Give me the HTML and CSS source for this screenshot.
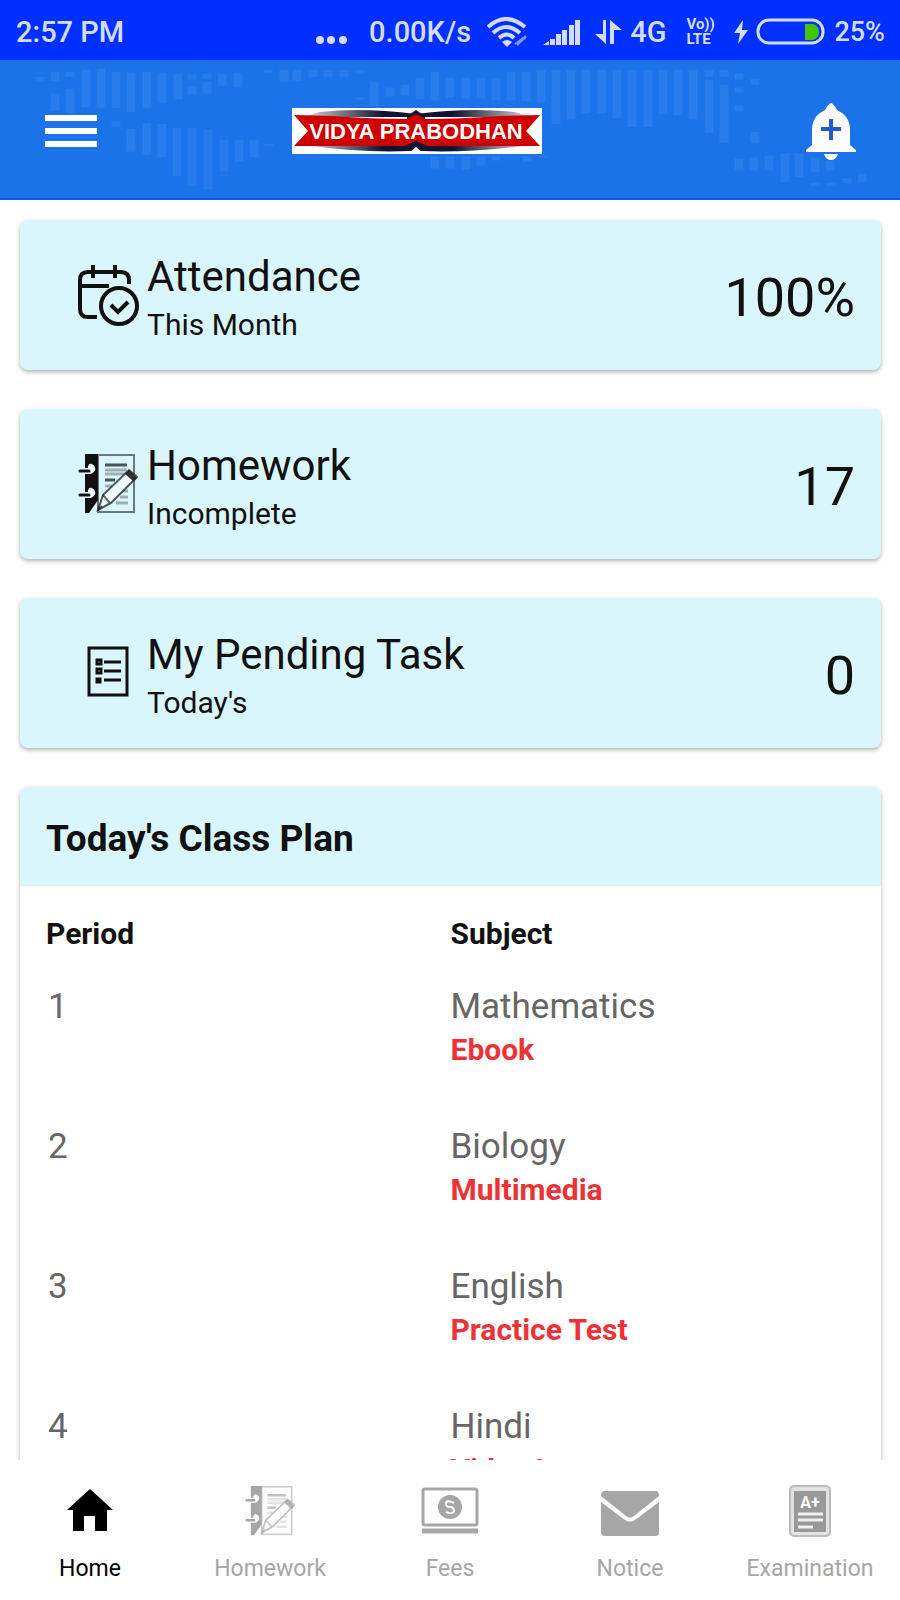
FILE: index.html
```html
<!DOCTYPE html>
<html lang="en">

<head>
    <meta charset="UTF-8">
    <meta name="viewport" content="width=device-width, initial-scale=1.0">
    <title>Vidya Prabodhan</title>
    <link rel="stylesheet" href="styles.css">
</head>

<body>

    <!-- Icon shared by the homework card and the bottom menu -->
    <svg class="sprite" aria-hidden="true">
        <symbol id="notebook" viewBox="0 0 60 60">
            <rect x="20" y="1" width="36" height="57" fill="none" stroke="currentColor" stroke-width="2" opacity=".55" />
            <path d="M7 0h13v46l-9 13H7z" fill="currentColor" />
            <path d="M27 11h22M27 26h10" stroke="currentColor" stroke-width="3" opacity=".7" />
            <path d="M27 16h22M27 20h20M27 32h7M42 37h8M42 43h8M38 49h12" stroke="currentColor" stroke-width="3" opacity=".3" />
            <g fill="none" stroke-linecap="round">
                <path d="M4 17h8q4-2 1-4M4 41h8q4-2 1-4" class="page-color" stroke-width="6" />
                <path d="M2 17h9M2 41h9" stroke="currentColor" stroke-width="3" />
            </g>
            <path d="M20 56l5-15 26-25 8 7-26 26z" class="page-fill" stroke="currentColor" stroke-width="2" stroke-opacity=".7" />
            <path d="M47 20l4-4 8 8-4 3z" fill="currentColor" opacity=".85" />
            <path d="M25 41l7 8M20 56l4-4" stroke="currentColor" stroke-width="2" opacity=".6" />
        </symbol>
    </svg>

    <!-- Status bar -->
    <div class="status-bar">
        <span class="time">2:57 PM</span>
        <div class="status-icons">
            <svg width="31" height="44" viewBox="0 0 31 44" fill="currentColor">
                <circle cx="4" cy="30" r="4" />
                <circle cx="15" cy="30" r="4" />
                <circle cx="27" cy="30" r="4" />
            </svg>
            <span class="speed">0.00K/s</span>
            <svg class="wifi" width="42" height="30" viewBox="0 0 42 30" fill="none" stroke="currentColor" stroke-width="4">
                <path d="M1 10q18-16 37 0M6 16q13-12 27 0M12 21q8-7 15 0" />
                <path d="M15 25q5-4 10 0l-5 5z" fill="currentColor" stroke="none" />
                <path d="M28 27l11-8M30 28l9-8" stroke-width="2" opacity=".6" />
            </svg>
            <svg class="signal" width="38" height="26" viewBox="0 0 38 26" fill="currentColor">
                <path d="M0 26l6-4v4zM7 20h5v6H7zM13 15h5v11h-5zM19 11h5v15h-5zM26 6h5v20h-5zM32 1h5v25h-5z" />
            </svg>
            <svg class="data" width="27" height="26" viewBox="0 0 27 26" fill="currentColor">
                <path d="M8 1h3v24L0 15h8zM19 25h-4V1l12 10h-8z" />
            </svg>
            <span class="network">4G</span>
            <span class="volte"><span>Vo))</span><span>LTE</span></span>
            <svg class="bolt" width="14" height="24" viewBox="0 0 14 24" fill="currentColor">
                <path d="M9 0L0 13h6L4 24l10-14H8z" />
            </svg>
            <svg class="battery" width="70" height="28" viewBox="0 0 70 28" fill="none">
                <rect x="2" y="2" width="65" height="23" rx="11" stroke="currentColor" stroke-width="3" />
                <path d="M49 6h8q6 2 6 8t-6 8h-8z" fill="#45c400" />
            </svg>
            <span class="percent">25%</span>
        </div>
    </div>

    <!-- App header -->
    <header class="app-header">
        <!-- Faint dotted map behind the header -->
        <svg class="map" viewBox="0 0 900 140" preserveAspectRatio="none" aria-hidden="true">
            <g fill="none" stroke="#297ceb" stroke-width="9">
                <path d="M40 17v4M55 12v9M70 12v5M55 34v18M70 29v25M86 10v38M101 9v40M116 12v37M131 13v40M147 12v37M162 13v31M178 14v26M192 14v6M192 26v10M207 14v5M207 22v12M222 14v12M238 13v15" />
                <path d="M116 62v6M131 70v23M147 64v32M162 65v34M177 69v49M192 69v59M208 71v60M224 81v32M239 81v22M254 81v18M269 85v2" />
                <path d="M268 10v3M284 10v12M297 10v11M313 10v7M328 10v7M344 10v7M360 10v3M360 38v2M374 22v25M390 28v9M405 25v11M420 18v22M435 12v29M450 18v20M466 18v21M481 18v21M496 18v23M511 12v29M526 12v30M541 10v33M556 10v55M571 10v50M586 10v44M602 10v44M617 10v49M632 10v58M648 10v58M663 10v45M678 10v46M693 10v50M709 10v7M709 20v54M724 10v7M724 25v59M739 14v6M739 28v5M739 46v6M755 19v6M755 73v11" />
                <path d="M435 98v12M450 98v12M466 98v13M481 98v9M496 98v4M527 98v5M543 97v2M739 100v12M754 99v13M769 97v15M785 94v30M799 94v25M815 99v15M830 102v10M815 125v3M831 125v3M847 120v5M862 116v8" />
            </g>
        </svg>
        <button type="button" class="icon-button" aria-label="Menu">
            <svg width="52" height="32" viewBox="0 0 52 32" fill="#fff">
                <path d="M0 0h52v6H0zM0 13h52v6H0zM0 26h52v6H0z" />
            </svg>
        </button>
        <svg class="logo" viewBox="0 0 250 46" role="img" aria-label="Vidya Prabodhan">
            <defs>
                <linearGradient id="swoosh">
                    <stop offset="0" stop-color="#ddd" />
                    <stop offset=".35" stop-color="#10132f" />
                    <stop offset=".65" stop-color="#10132f" />
                    <stop offset="1" stop-color="#ddd" />
                </linearGradient>
            </defs>
            <path d="M0 0h250v46H0z" fill="#fff" />
            <path d="M28 4Q70-1 124 6q54-7 98-2l20 5H10zM12 37h226q-60 8-108 6h-12q-50 2-106-6z" fill="url(#swoosh)" />
            <path d="M115 8l9-6 9 6v3h-18z" fill="#111633" />
            <path d="M2 7l38 1q40 3 74 3l10-5 10 5q34 0 74-3l40-1-14 16 14 15H2l14-15z" fill="#ce0000" />
            <path d="M113 38l11-5 11 5v4h-22z" fill="#111633" />
            <path d="M117 45l7-6 7 6z" fill="#fff" />
            <text x="124" y="31" class="logo-text">VIDYA PRABODHAN</text>
        </svg>
        <button type="button" class="icon-button" aria-label="Notifications">
            <svg width="50" height="57" viewBox="0 0 50 57">
                <path d="M25 0q3 1 6 7 13 6 13 20v15l6 5v2H0v-2l6-5V27Q6 13 19 7q3-6 6-7zM18 51h14q-2 6-7 6t-7-6z" fill="#fff" />
                <path d="M25 16v21M15 26h20" stroke="#2459cc" stroke-width="4" />
            </svg>
        </button>
    </header>

    <!-- Main content -->
    <main class="main-content">
        <section class="card">
            <div class="card-icon">
                <svg width="62" height="62" viewBox="0 0 62 62" fill="none" stroke="#111" stroke-width="4">
                    <path d="M20 53h-9q-8 0-8-8V16q0-8 8-8h33q8 0 8 8v4M3 22h29M16 1v13M38 1v13" />
                    <circle cx="42" cy="42" r="18" />
                    <path d="M34 41l7 7 10-10" />
                </svg>
            </div>
            <div class="card-text">
                <h2>Attendance</h2>
                <p>This Month</p>
            </div>
            <span class="card-value">100%</span>
        </section>

        <section class="card">
            <div class="card-icon">
                <svg width="60" height="60"><use href="#notebook" /></svg>
            </div>
            <div class="card-text">
                <h2>Homework</h2>
                <p>Incomplete</p>
            </div>
            <span class="card-value">17</span>
        </section>

        <section class="card">
            <div class="card-icon">
                <svg width="42" height="55" viewBox="0 0 42 55" fill="none" stroke="#111" stroke-width="3">
                    <path d="M2 2h38v47H2z" />
                    <path d="M17 16h17M17 25h17M17 34h17" />
                    <path d="M10 14h4v4h-4zM10 23h4v4h-4zM10 33h3v3h-3z" />
                </svg>
            </div>
            <div class="card-text">
                <h2>My Pending Task</h2>
                <p>Today's</p>
            </div>
            <span class="card-value">0</span>
        </section>

        <section class="class-plan">
            <h3>Today's Class Plan</h3>
            <table>
                <thead>
                    <tr>
                        <th>Period</th>
                        <th>Subject</th>
                    </tr>
                </thead>
                <tbody>
                    <tr>
                        <td>1</td>
                        <td>Mathematics <a href="#">Ebook</a></td>
                    </tr>
                    <tr>
                        <td>2</td>
                        <td>Biology <a href="#">Multimedia</a></td>
                    </tr>
                    <tr>
                        <td>3</td>
                        <td>English <a href="#">Practice Test</a></td>
                    </tr>
                    <tr>
                        <td>4</td>
                        <td>Hindi <a href="#">Video Lect</a></td>
                    </tr>
                </tbody>
            </table>
        </section>
    </main>

    <!-- Bottom menu -->
    <nav class="bottom-nav">
        <a href="#" class="active">
            <svg width="46" height="52" viewBox="0 0 46 52" fill="currentColor">
                <path d="M23 4l23 21h-6v21H28V31H17v15H6V25H0z" />
            </svg>
            Home
        </a>
        <a href="#">
            <svg width="50" height="52"><use href="#notebook" /></svg>
            Homework
        </a>
        <a href="#">
            <svg width="58" height="52" viewBox="0 0 58 52" fill="none" stroke="currentColor" stroke-width="3">
                <rect x="2" y="4" width="54" height="36" rx="2" />
                <path d="M1 46h56" stroke-width="5" />
                <circle cx="29" cy="22" r="12" fill="currentColor" stroke="none" />
                <path d="M33 18q-8-4-8 1 0 3 4 3t4 4q-1 4-8 1" stroke="#fff" stroke-width="2" />
            </svg>
            Fees
        </a>
        <a href="#">
            <svg width="58" height="52" viewBox="0 0 58 52" fill="currentColor">
                <path d="M4 6h50q4 0 4 5L33 31q-4 3-8 0L0 11q0-5 4-5zM0 17l24 18q5 3 10 0l24-18v30q0 4-4 4H4q-4 0-4-4z" />
            </svg>
            Notice
        </a>
        <a href="#">
            <svg width="44" height="52" viewBox="0 0 44 52">
                <rect x="2" y="1" width="40" height="50" rx="4" fill="#e2e2e2" stroke="#bbb" stroke-width="2" />
                <path d="M6 6h32v41H6z" fill="#999" />
                <path d="M10 29h25M10 35h25M10 42h15" stroke="#eee" stroke-width="3" />
                <text x="22" y="23" class="grade">A+</text>
            </svg>
            Examination
        </a>
    </nav>

</body>

</html>
```
FILE: styles.css
```css
* {
    box-sizing: border-box;
}

body {
    margin: 0;
    height: 100vh;
    display: flex;
    flex-direction: column;
    font-family: Roboto, "Liberation Sans", sans-serif;
    background-color: #fefefe;
    color: #111;
}

h2,
h3,
p {
    margin: 0;
    font-weight: 400;
}

svg {
    display: block;
    flex: none;
}

a {
    text-decoration: none;
}

.sprite {
    position: absolute;
    width: 0;
    height: 0;
}

.page-color {
    stroke: var(--page);
}

.page-fill {
    fill: var(--page);
}

/* Status bar */
.status-bar {
    height: 60px;
    flex: none;
    display: flex;
    align-items: center;
    justify-content: space-between;
    padding: 4px 15px 0 16px;
    background-color: #0030ff;
    color: #d3dcff;
    font-size: 29px;
    font-weight: 500;
}

.status-icons {
    display: flex;
    align-items: center;
}

.speed {
    margin: 0 16px 0 22px;
}

.wifi,
.signal {
    margin-right: 14px;
}

.data {
    margin-right: 8px;
}

.network {
    margin-right: 20px;
}

.volte {
    display: grid;
    width: 32px;
    margin-right: 16px;
    font-size: 15px;
    line-height: 15px;
    font-weight: 700;
}

.bolt,
.battery {
    margin-right: 8px;
}

.percent {
    font-size: 27px;
}

/* App header */
.app-header {
    position: relative;
    height: 140px;
    flex: none;
    display: flex;
    align-items: center;
    justify-content: space-between;
    padding: 4px 44px 0 45px;
    background-color: #1a73e8;
    border-bottom: 2px solid #0560e0;
}

.map {
    position: absolute;
    top: 0;
    left: 0;
    width: 100%;
    height: 100%;
}

.icon-button {
    position: relative;
    padding: 0;
    border: none;
    background: none;
    cursor: pointer;
}

.logo {
    position: relative;
    width: 250px;
    height: 46px;
    margin-right: 70px;
}

.logo-text {
    font-family: "Liberation Sans", sans-serif;
    font-size: 22px;
    font-weight: 700;
    fill: #fff;
    text-anchor: middle;
}

/* Main content area */
.main-content {
    flex: 1;
    min-height: 0;
    overflow: hidden;
    display: flex;
    flex-direction: column;
    gap: 39px;
    padding: 20px 19px 0 20px;
}

.card,
.class-plan {
    flex: none;
    border-radius: 8px;
    box-shadow: 0 2px 4px rgba(0, 0, 0, 0.3);
}

.card {
    --page: #eefbff;
    display: flex;
    align-items: center;
    height: 150px;
    padding: 0 26px 0 52px;
    background-color: #d9f6fc;
}

.card-icon {
    display: flex;
    justify-content: center;
    width: 72px;
    margin-right: 3px;
}

.card-text {
    flex: 1;
    padding-top: 8px;
}

.card-text h2 {
    font-size: 42px;
    line-height: 52px;
}

.card-text p {
    font-size: 30px;
    line-height: 44px;
}

.card-value {
    padding-top: 4px;
    font-size: 54px;
}

/* Class plan */
.class-plan {
    overflow: hidden;
    background-color: #fefefe;
}

.class-plan h3 {
    padding: 4px 26px 0;
    font-size: 37px;
    font-weight: 700;
    line-height: 95px;
    background-color: #d9f6fc;
}

.class-plan table {
    width: 100%;
    border-collapse: collapse;
    table-layout: fixed;
}

.class-plan th {
    padding: 28px 0 20px 26px;
    font-size: 30px;
    font-weight: 700;
    line-height: 40px;
    text-align: left;
}

.class-plan td {
    height: 140px;
    padding: 11px 0 0 28px;
    font-size: 35px;
    line-height: 44px;
    color: #666;
    vertical-align: top;
}

.class-plan th + th,
.class-plan td + td {
    padding-left: 0;
}

.class-plan td a {
    display: block;
    font-size: 30px;
    line-height: 42px;
    font-weight: 700;
    color: #ec3237;
}

/* Bottom menu */
.bottom-nav {
    --page: #fefefe;
    flex: none;
    display: grid;
    grid-template-columns: repeat(5, 1fr);
    height: 140px;
    padding-top: 25px;
    background-color: #fefefe;
}

.bottom-nav a {
    display: flex;
    flex-direction: column;
    align-items: center;
    gap: 16px;
    font-size: 23px;
    line-height: 32px;
    color: #a6a6a6;
}

.bottom-nav .active {
    color: #000;
}

.grade {
    font-size: 16px;
    font-weight: 700;
    fill: #fff;
    text-anchor: middle;
}
```
